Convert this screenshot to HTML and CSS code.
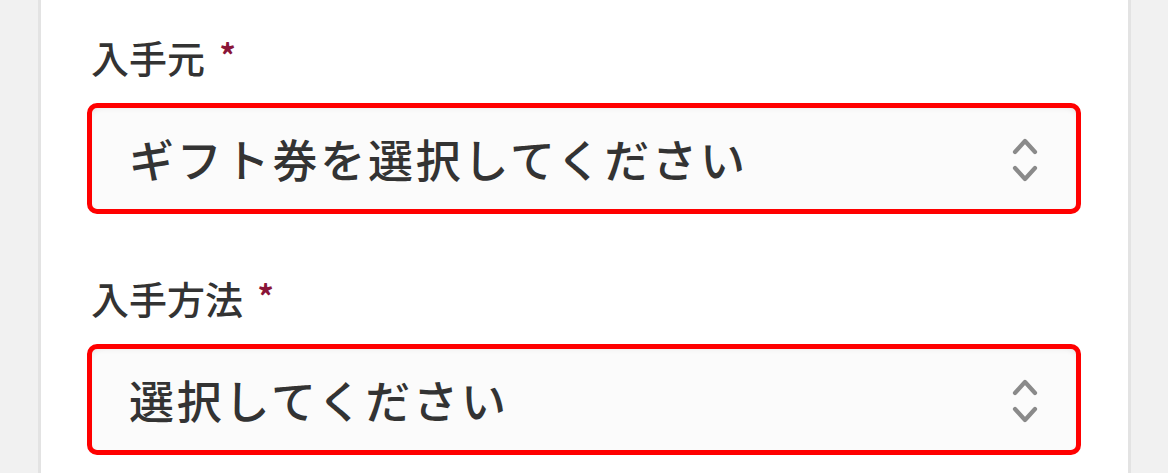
FILE: index.html
```html
<!DOCTYPE html>
<html lang="ja">
<head>
<meta charset="utf-8">
<link rel="stylesheet" href="styles.css">
</head>
<body>
<div class="page">
  <div class="card">
    <div class="field">
      <div class="label">入手元 <span class="req">*</span></div>
      <div class="select-wrap">
        <div class="select">
          <span class="select-text">ギフト券を選択してください</span>
          <svg class="chev" width="26" height="44" viewBox="0 0 26 44"><path d="M3 14 L13 3 L23 14 M3 30 L13 41 L23 30" fill="none" stroke="#8a8a8a" stroke-width="4.2" stroke-linecap="round" stroke-linejoin="round"/></svg>
        </div>
        <div class="highlight"></div>
      </div>
    </div>
    <div class="field">
      <div class="label">入手方法 <span class="req">*</span></div>
      <div class="select-wrap">
        <div class="select">
          <span class="select-text">選択してください</span>
          <svg class="chev" width="26" height="44" viewBox="0 0 26 44"><path d="M3 14 L13 3 L23 14 M3 30 L13 41 L23 30" fill="none" stroke="#8a8a8a" stroke-width="4.2" stroke-linecap="round" stroke-linejoin="round"/></svg>
        </div>
        <div class="highlight"></div>
      </div>
    </div>
  </div>
</div>
</body>
</html>
```
FILE: styles.css
```css
html, body {
  margin: 0;
  padding: 0;
  background: #f1f1f1;
  font-family: "Noto Sans CJK JP", "Noto Sans", sans-serif;
  color: #333333;
}
.page {
  display: flex;
  height: 473px;
  overflow: hidden;
}
.card {
  margin-left: 38px;
  width: 994px;
  background: #ffffff;
  border-left: 3px solid #e3e3e3;
  border-right: 3px solid #e3e3e3;
  padding: 34px 47px 0 46px;
  box-sizing: content-box;
  display: flex;
  flex-direction: column;
}
.field {
  display: flex;
  flex-direction: column;
}
.field + .field {
  margin-top: 61px;
}
.label {
  font-size: 38px;
  font-weight: 500;
  line-height: 46px;
  height: 46px;
  padding-left: 4px;
  margin-bottom: 23px;
  color: #333;
}
.req {
  color: #8a1538;
  font-size: 32px;
  font-weight: 700;
  margin-left: 6px;
  position: relative;
  top: -5px;
}
.select-wrap {
  position: relative;
  height: 111px;
}
.select {
  box-sizing: border-box;
  height: 111px;
  border: 1px solid #8f8f8f;
  border-radius: 16px;
  background: #fbfbfb;
  box-shadow: inset 0 3px 6px rgba(0,0,0,0.10), inset 0 -1px 3px rgba(0,0,0,0.06);
  display: flex;
  align-items: center;
  justify-content: space-between;
  padding: 0 42px 0 41px;
}
.select-text {
  font-size: 45px;
  font-weight: 500;
  letter-spacing: 2.8px;
  color: #333;
  line-height: 1;
}
.chev {
  display: block;
  margin-top: 3px;
}
.highlight {
  position: absolute;
  inset: 0;
  border: 5px solid #ff0000;
  border-radius: 10px;
  box-sizing: border-box;
  pointer-events: none;
}
```
